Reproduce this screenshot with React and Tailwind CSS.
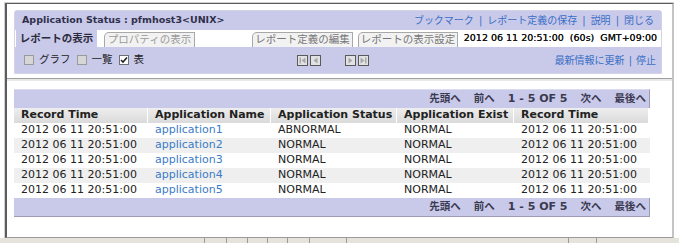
import React from 'react';

const rows = [
  { time: '2012 06 11 20:51:00', name: 'application1', status: 'ABNORMAL', exist: 'NORMAL' },
  { time: '2012 06 11 20:51:00', name: 'application2', status: 'NORMAL', exist: 'NORMAL' },
  { time: '2012 06 11 20:51:00', name: 'application3', status: 'NORMAL', exist: 'NORMAL' },
  { time: '2012 06 11 20:51:00', name: 'application4', status: 'NORMAL', exist: 'NORMAL' },
  { time: '2012 06 11 20:51:00', name: 'application5', status: 'NORMAL', exist: 'NORMAL' },
];

const cols = ['w-[133px]', 'w-[122px]', 'w-[125px]', 'w-[116px]', 'w-[134px]'];

function Sep() {
  return <span className="mx-[5px] text-[#3a6fc4]">|</span>;
}

function Checkbox({ checked, disabled }) {
  return (
    <span
      className={`inline-flex items-center justify-center w-[10px] h-[10px] border ${
        disabled ? 'border-[#9a9a9a] bg-[#d6d6d6]' : 'border-[#707070] bg-white'
      }`}
    >
      {checked && (
        <svg width="8" height="8" viewBox="0 0 8 8">
          <path d="M1 4 L3 6 L7 1.5" stroke="#222" strokeWidth="1.6" fill="none" />
        </svg>
      )}
    </span>
  );
}

function NavButton({ kind }) {
  return (
    <span className="inline-flex items-center justify-center w-[11px] h-[11px] border border-[#5a5a5a] bg-[#e2e2e2]">
      <svg width="7" height="7" viewBox="0 0 7 7">
        {kind === 'first' && (
          <>
            <rect x="0.5" y="0.5" width="1.5" height="6" fill="#a8a8a8" />
            <path d="M6.5 0.5 L2.5 3.5 L6.5 6.5 Z" fill="#a8a8a8" />
          </>
        )}
        {kind === 'prev' && <path d="M5.5 0.5 L1.5 3.5 L5.5 6.5 Z" fill="#a8a8a8" />}
        {kind === 'next' && <path d="M1.5 0.5 L5.5 3.5 L1.5 6.5 Z" fill="#a8a8a8" />}
        {kind === 'last' && (
          <>
            <path d="M0.5 0.5 L4.5 3.5 L0.5 6.5 Z" fill="#a8a8a8" />
            <rect x="5" y="0.5" width="1.5" height="6" fill="#a8a8a8" />
          </>
        )}
      </svg>
    </span>
  );
}

function Pager({ bottom }) {
  return (
    <div
      className={`h-[19px] bg-[#c9c9ea] flex items-center justify-end gap-[13px] pr-[3px] text-[11px] font-bold text-[#3a3a50] border-r border-[#9c9cb4] ${
        bottom ? 'border-b' : 'border-t border-t-[#dcdcf0]'
      }`}
    >
      <span className="text-[10.5px]">先頭へ</span>
      <span className="text-[10.5px]">前へ</span>
      <span>1 - 5 OF 5</span>
      <span className="text-[10.5px]">次へ</span>
      <span className="text-[10.5px]">最後へ</span>
    </div>
  );
}

function App() {
  return (
    <div
      className="w-[679px] h-[243px] bg-white overflow-hidden text-[#222]"
      style={{ fontFamily: '"DejaVu Sans", "Noto Sans CJK JP", sans-serif' }}
    >
      <div className="ml-[4px] mt-[2px] w-[670px] h-[236px] border-l border-t border-[#d0d0d0]">
        <div className="h-full flex flex-col border-l-2 border-t border-[#5c5c5c] border-r-2 border-r-[#c4c4c4] border-b border-b-[#9a9a9a]">
          {/* upper frame */}
          <div className="h-[74px] pl-[7px] pt-[6px]">
            <div className="w-[648px] border border-[#d4d4e8] rounded-t-[3px]">
              <div className="h-[19px] bg-[#c9c9ea] flex items-center justify-between px-[7px]">
                <span className="text-[9.5px] font-bold text-[#30304a]">Application Status : pfmhost3&lt;UNIX&gt;</span>
                <span className="text-[10px] text-[#3a6fc4] flex items-center">
                  ブックマーク<Sep />レポート定義の保存<Sep />説明<Sep />閉じる
                </span>
              </div>
              <div className="h-[17px] bg-white flex items-end text-[10.5px]">
                <span className="h-[17px] w-[82px] bg-[#c9c9ea] flex items-center justify-center font-bold text-[#2a2a3a] border-l border-white">
                  レポートの表示
                </span>
                <span className="ml-[7px] h-[15px] w-[91px] bg-[#f2f2f2] border-l border-t border-r border-[#a8a8a8] rounded-tl-[5px] flex items-center justify-center text-[#9a9a9a]">
                  プロパティの表示
                </span>
                <span className="ml-[57px] h-[15px] w-[101px] bg-[#f2f2f2] border-l border-t border-r border-[#a8a8a8] rounded-tl-[5px] flex items-center justify-center text-[#777]">
                  レポート定義の編集
                </span>
                <span className="ml-[5px] h-[15px] w-[100px] bg-[#f2f2f2] border-l border-t border-r border-[#a8a8a8] rounded-tl-[5px] flex items-center justify-center text-[#777]">
                  レポートの表示設定
                </span>
                <span className="ml-auto mr-[4px] h-[17px] flex items-center gap-[6px] text-[9.5px] text-[#111] [text-shadow:0_0_0.3px_#111]">
                  <span>2012 06 11 20:51:00</span>
                  <span>(60s)</span>
                  <span>GMT+09:00</span>
                </span>
              </div>
              <div className="h-[26px] bg-[#c9c9ea] flex items-center pl-[9px] pr-[5px] text-[10.5px]">
                <span className="flex items-center gap-[5px]">
                  <Checkbox disabled />
                  <span>グラフ</span>
                </span>
                <span className="flex items-center gap-[5px] ml-[6px]">
                  <Checkbox disabled />
                  <span>一覧</span>
                </span>
                <span className="flex items-center gap-[5px] ml-[6px]">
                  <Checkbox checked />
                  <span>表</span>
                </span>
                <span className="flex items-center ml-[153px] gap-[2px]">
                  <NavButton kind="first" />
                  <NavButton kind="prev" />
                  <span className="w-[20px]" />
                  <NavButton kind="next" />
                  <NavButton kind="last" />
                </span>
                <span className="ml-auto text-[10px] text-[#3a6fc4] flex items-center">
                  最新情報に更新<span className="mx-[4px]">|</span>停止
                </span>
              </div>
            </div>
          </div>

          {/* splitter */}
          <div className="h-[3px] border-t border-[#a0a0a0] bg-[#e8e8e8]" />

          {/* lower frame */}
          <div className="flex-1 pl-[7px] pt-[8px]">
            <div className="w-[636px]">
              <Pager />
              <div className="flex gap-px bg-white h-[15px] text-[11px] font-bold">
                {['Record Time', 'Application Name', 'Application Status', 'Application Exist', 'Record Time'].map((h, i) => (
                  <div
                    key={i}
                    className={`${cols[i]} bg-linear-to-b from-[#eeeeee] to-[#dadada] pl-[7px] flex items-center`}
                  >
                    {h}
                  </div>
                ))}
              </div>
              {rows.map((r, idx) => (
                <div
                  key={idx}
                  className={`flex gap-px h-[15px] text-[11px] ${idx % 2 === 1 ? 'bg-[#efefef]' : 'bg-white'}`}
                >
                  <div className={`${cols[0]} pl-[7px] flex items-center`}>{r.time}</div>
                  <div className={`${cols[1]} pl-[7px] flex items-center text-[#3a7bc8]`}>{r.name}</div>
                  <div className={`${cols[2]} pl-[7px] flex items-center`}>{r.status}</div>
                  <div className={`${cols[3]} pl-[7px] flex items-center`}>{r.exist}</div>
                  <div className={`${cols[4]} pl-[7px] flex items-center`}>{r.time}</div>
                </div>
              ))}
              <Pager bottom />
            </div>
          </div>
        </div>
      </div>
      <div className="h-[5px] bg-[#e6e3dc] flex">
        <div className="w-[205px] border-r border-[#9a9a9a]" />
        <div className="w-[22px] border-r border-[#9a9a9a]" />
        <div className="w-[21px] border-r border-[#9a9a9a]" />
        <div className="w-[20px] border-r border-[#9a9a9a]" />
        <div className="w-[20px] border-r border-[#9a9a9a]" />
        <div className="w-[22px] border-r border-[#9a9a9a]" />
        <div className="w-[37px] border-r border-[#9a9a9a]" />
        <div className="w-[222px] border-r border-[#9a9a9a]" />
        <div className="w-[28px] border-r border-[#9a9a9a]" />
      </div>
    </div>
  );
}

export default App;
